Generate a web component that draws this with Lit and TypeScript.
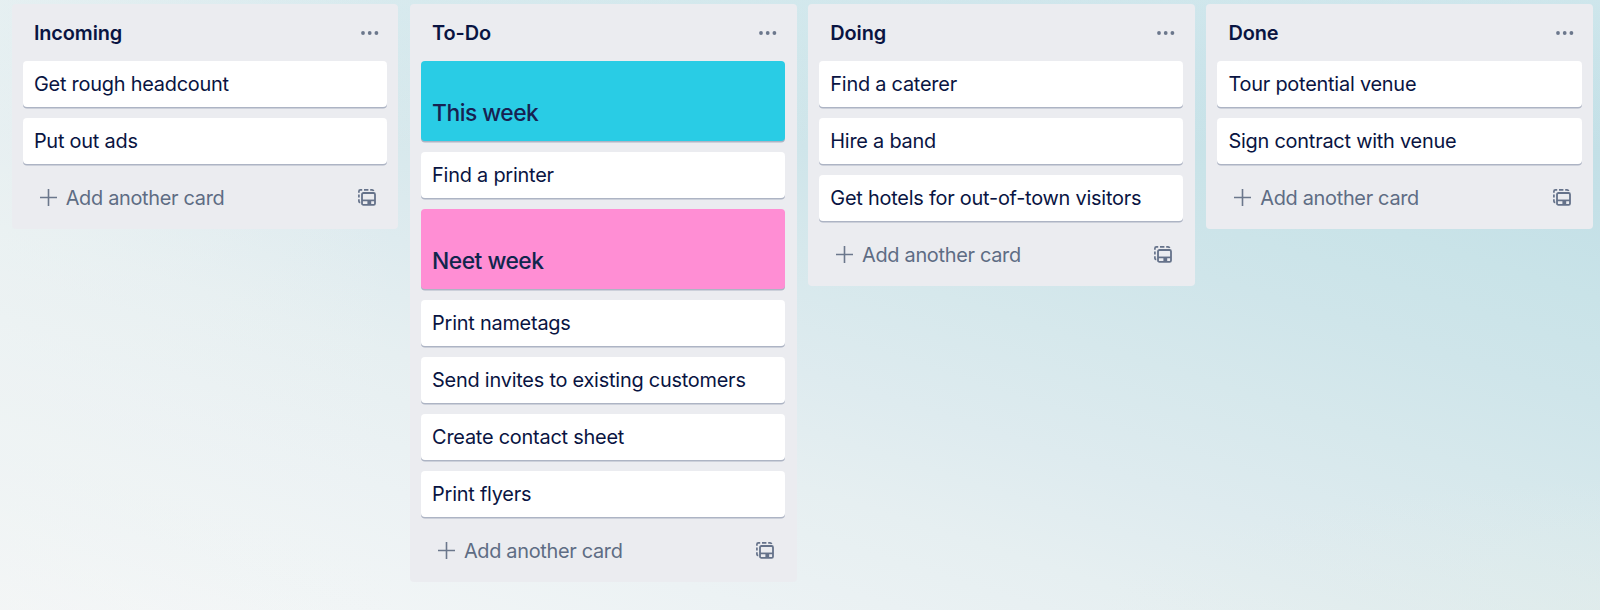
import { LitElement, html, css, svg } from "lit";
import { customElement, property } from "lit/decorators.js";
import { classMap } from "lit/directives/class-map.js";

interface Card {
  text: string;
  cover?: "sky" | "pink";
}

interface List {
  title: string;
  cards: Card[];
}

const LISTS: List[] = [
  { title: "Incoming", cards: [{ text: "Get rough headcount" }, { text: "Put out ads" }] },
  {
    title: "To-Do",
    cards: [
      { text: "This week", cover: "sky" },
      { text: "Find a printer" },
      { text: "Neet week", cover: "pink" },
      { text: "Print nametags" },
      { text: "Send invites to existing customers" },
      { text: "Create contact sheet" },
      { text: "Print flyers" },
    ],
  },
  {
    title: "Doing",
    cards: [
      { text: "Find a caterer" },
      { text: "Hire a band" },
      { text: "Get hotels for out-of-town visitors" },
    ],
  },
  { title: "Done", cards: [{ text: "Tour potential venue" }, { text: "Sign contract with venue" }] },
];

const dots = svg`<circle cx="2" cy="2" r="1.9"/><circle cx="8.7" cy="2" r="1.9"/><circle cx="15.4" cy="2" r="1.9"/>`;

@customElement("board-list")
class BoardList extends LitElement {
  @property({ attribute: false }) list!: List;

  static styles = css`
    :host {
      display: block;
      box-sizing: border-box;
      width: 386.8px;
      padding: 0 11.3px;
      border-radius: 4px;
      background: #ebecf0;
      color: #091442;
    }
    .header {
      display: flex;
      align-items: center;
      justify-content: space-between;
      height: 57px;
      padding: 0 8px 0 11px;
    }
    .title {
      margin: 0;
      font-size: 19.9px;
      font-weight: 600;
      line-height: 28px;
      letter-spacing: -0.1px;
    }
    .dots {
      width: 18px;
      height: 4px;
      fill: #6b778c;
    }
    .cards {
      display: flex;
      flex-direction: column;
      gap: 11px;
    }
    .card {
      box-sizing: border-box;
      height: 46px;
      padding: 9px 11px 8px;
      border-radius: 4px;
      background: #fff;
      box-shadow: 0 1.4px 0 #adb4c4;
      font-size: 19.9px;
      line-height: 29px;
      letter-spacing: -0.22px;
      white-space: nowrap;
    }
    .cover {
      display: flex;
      align-items: flex-end;
      height: 80px;
      padding-bottom: 14px;
      font-size: 22.8px;
      font-weight: 500;
      letter-spacing: -0.5px;
    }
    .sky { background: #29cce5; color: #172251; }
    .pink { background: #ff8ed4; color: #10264d; }
    .footer {
      display: flex;
      align-items: center;
      height: 65px;
      padding: 2px 11px 0 16.8px;
      box-sizing: border-box;
      color: #5e6c84;
      font-size: 19.9px;
      letter-spacing: -0.3px;
    }
    .plus {
      width: 17px;
      height: 17px;
      margin-right: 9px;
      stroke: #6b778c;
      stroke-width: 1.6;
    }
    .add { flex: 1; }
    .template {
      width: 18px;
      height: 17px;
      fill: none;
      stroke: #65728a;
    }
  `;

  render() {
    return html`
      <div class="header">
        <h2 class="title">${this.list.title}</h2>
        <svg class="dots" viewBox="0 0 18 4">${dots}</svg>
      </div>
      <div class="cards">
        ${this.list.cards.map(
          (c) => html`<div
            class=${classMap({ card: true, cover: !!c.cover, sky: c.cover === "sky", pink: c.cover === "pink" })}
          >${c.text}</div>`
        )}
      </div>
      <div class="footer">
        <svg class="plus" viewBox="0 0 17 17"><path d="M8.5 0v17M0 8.5h17" /></svg>
        <span class="add">Add another card</span>
        <svg class="template" viewBox="0 0 18 17">
          <path stroke-width="1.7" d="M.9 3.8V2.4Q.9.9 2.4.9h1.8M6 .9h4.4M12.2.9h1.8q1.2 0 1.7 1.1M.9 5.4v3.2M.9 10.2v2q0 1.2 1.4 1.4" />
          <rect x="4" y="4" width="13" height="11.8" rx="1.4" stroke-width="1.8" />
          <path stroke-width="1.7" d="M4 11.4h13" />
          <path stroke-width="3.4" d="M9.4 13.6h3.8" />
        </svg>
      </div>
    `;
  }
}

@customElement("app-root")
class AppRoot extends LitElement {
  static styles = css`
    :host {
      display: block;
      box-sizing: border-box;
      height: 610px;
      overflow: hidden;
      padding: 4px 0 0 11.6px;
      font-family: Inter, "Liberation Sans", sans-serif;
      background:
        linear-gradient(90deg, rgba(238, 243, 243, 0.5) 0, rgba(238, 243, 243, 0) 400px),
        linear-gradient(180deg, rgba(232, 243, 246, 0.35) 0, rgba(232, 243, 246, 0) 150px),
        radial-gradient(ellipse 500px 130px at 1600px 610px, rgba(226, 237, 233, 0.5), rgba(226, 237, 233, 0)),
        linear-gradient(
          18deg,
          #f8f8f9 0,
          #f1f5f6 110px,
          #ecf2f4 235px,
          #e6eff1 365px,
          #deebef 475px,
          #d6e8ec 590px,
          #cfe5ea 690px,
          #c9e3e8 790px,
          #c4e0e7 880px,
          #c0dfe6 1074px
        );
    }
    .board {
      display: flex;
      align-items: flex-start;
      gap: 11.4px;
    }
    .list { flex: none; }
  `;

  render() {
    return html`<div class="board">
      ${LISTS.map((l) => html`<board-list class="list" .list=${l}></board-list>`)}
    </div>`;
  }
}
